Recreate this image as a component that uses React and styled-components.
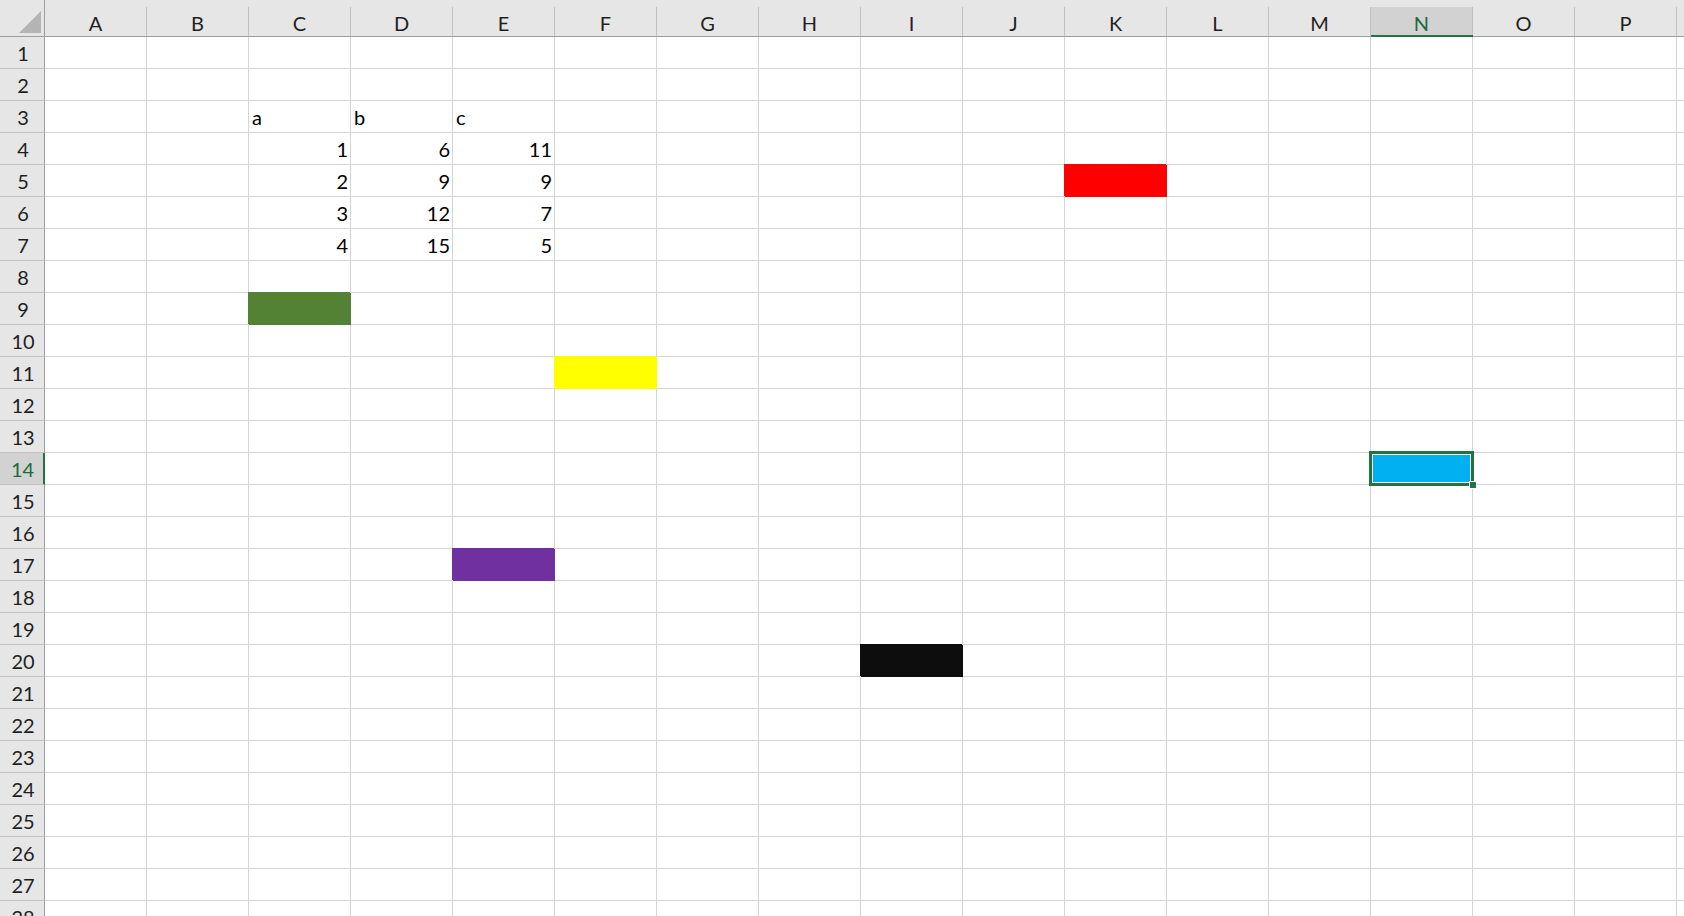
import React from "react";
import styled, { createGlobalStyle, css } from "styled-components";

const GlobalStyle = createGlobalStyle`
  html, body { margin: 0; padding: 0; background: #ffffff; overflow: hidden; }
  body { font-family: Lato, "Liberation Sans", sans-serif; }
`;

const COLS = "ABCDEFGHIJKLMNOPQ".split("");
const ROW_COUNT = 29;
const SELECTED = { col: "N", row: 14 };

const DATA = {
  C3: { v: "a", align: "left" },
  D3: { v: "b", align: "left" },
  E3: { v: "c", align: "left" },
  C4: { v: "1" }, D4: { v: "6" }, E4: { v: "11" },
  C5: { v: "2" }, D5: { v: "9" }, E5: { v: "9" },
  C6: { v: "3" }, D6: { v: "12" }, E6: { v: "7" },
  C7: { v: "4" }, D7: { v: "15" }, E7: { v: "5" },
};

const FILLS = {
  K5: "#ff0000",
  C9: "#548235",
  F11: "#ffff00",
  N14: "#00b0f0",
  E17: "#7030a0",
  I20: "#0d0d0d",
};

const Viewport = styled.div`
  width: 100vw;
  height: 100vh;
  overflow: hidden;
`;

const Sheet = styled.div`
  display: grid;
  grid-template-columns: 45px repeat(${COLS.length}, 102px);
  grid-template-rows: 37px;
  grid-auto-rows: 32px;
  width: max-content;
  font-family: Lato, "Liberation Sans", sans-serif;
  font-size: 20px;
  line-height: 24px;
  color: #000;
`;

const Corner = styled.div`
  box-sizing: border-box;
  background: #e6e6e6;
  border-right: 1px solid #9e9e9e;
  border-bottom: 1px solid #9e9e9e;
  display: flex;
  align-items: flex-start;
  justify-content: flex-end;
  padding: 11px 2px 0 0;
`;

const CornerTriangle = styled.svg`
  display: block;
  width: 23px;
  height: 23px;
`;

const ColHeader = styled.div`
  box-sizing: border-box;
  background: #e6e6e6;
  border-bottom: ${(p) => (p.$active ? "2px solid #217346" : "1px solid #9e9e9e")};
  display: flex;
  flex-direction: column;
`;

const ColHeaderFace = styled.div`
  flex: 1;
  margin-top: 7px;
  border-right: 1px solid #bfbfbf;
  background: ${(p) => (p.$active ? "#d2d2d2" : "transparent")};
  color: ${(p) => (p.$active ? "#1d6b40" : "#1f1f1f")};
  display: flex;
  align-items: flex-end;
  justify-content: center;
  padding-bottom: ${(p) => (p.$active ? "0px" : "1px")};
`;

const RowHeader = styled.div`
  box-sizing: border-box;
  background: ${(p) => (p.$active ? "#d2d2d2" : "#e6e6e6")};
  border-right: ${(p) => (p.$active ? "2px solid #217346" : "1px solid #9e9e9e")};
  border-bottom: 1px solid #c2c2c2;
  color: ${(p) => (p.$active ? "#1d6b40" : "#1f1f1f")};
  display: flex;
  align-items: flex-end;
  justify-content: center;
  padding: 0 0 3px 2px;
`;

const Cell = styled.div`
  box-sizing: border-box;
  border-right: 1px solid #d4d4d4;
  border-bottom: 1px solid #d4d4d4;
  display: flex;
  align-items: flex-end;
  justify-content: ${(p) => (p.$align === "left" ? "flex-start" : "flex-end")};
  padding: 0 2px 3px 3px;
  white-space: nowrap;
  ${(p) =>
    p.$fill &&
    css`
      background: ${p.$fill};
      border-color: ${p.$fill};
      box-shadow: -1px -1px 0 0 ${p.$fill};
    `}
  ${(p) =>
    p.$selected &&
    css`
      position: relative;
    `}
`;

const Selection = styled.div`
  position: absolute;
  left: -2px;
  top: -2px;
  width: 105px;
  height: 35px;
  box-sizing: border-box;
  border: 3px solid #217346;
  box-shadow: inset 0 0 0 1px #ffffff;
  pointer-events: none;
`;

const FillHandle = styled.div`
  position: absolute;
  right: -6px;
  bottom: -6px;
  width: 6px;
  height: 6px;
  background: #217346;
  border: 1px solid #ffffff;
`;

export default function App() {
  const rows = Array.from({ length: ROW_COUNT }, (_, i) => i + 1);
  return (
    <Viewport>
      <GlobalStyle />
      <Sheet>
        <Corner>
          <CornerTriangle viewBox="0 0 23 23">
            <polygon points="22,0 22,22 0,22" fill="#b4b4b4" />
          </CornerTriangle>
        </Corner>
        {COLS.map((c) => (
          <ColHeader key={c} $active={c === SELECTED.col}>
            <ColHeaderFace $active={c === SELECTED.col}>{c}</ColHeaderFace>
          </ColHeader>
        ))}
        {rows.map((r) => (
          <React.Fragment key={r}>
            <RowHeader $active={r === SELECTED.row}>{r}</RowHeader>
            {COLS.map((c) => {
              const id = c + r;
              const d = DATA[id];
              const selected = c === SELECTED.col && r === SELECTED.row;
              return (
                <Cell
                  key={id}
                  $align={d?.align}
                  $fill={FILLS[id]}
                  $selected={selected}
                >
                  {d ? d.v : null}
                  {selected && (
                    <Selection>
                      <FillHandle />
                    </Selection>
                  )}
                </Cell>
              );
            })}
          </React.Fragment>
        ))}
      </Sheet>
    </Viewport>
  );
}
